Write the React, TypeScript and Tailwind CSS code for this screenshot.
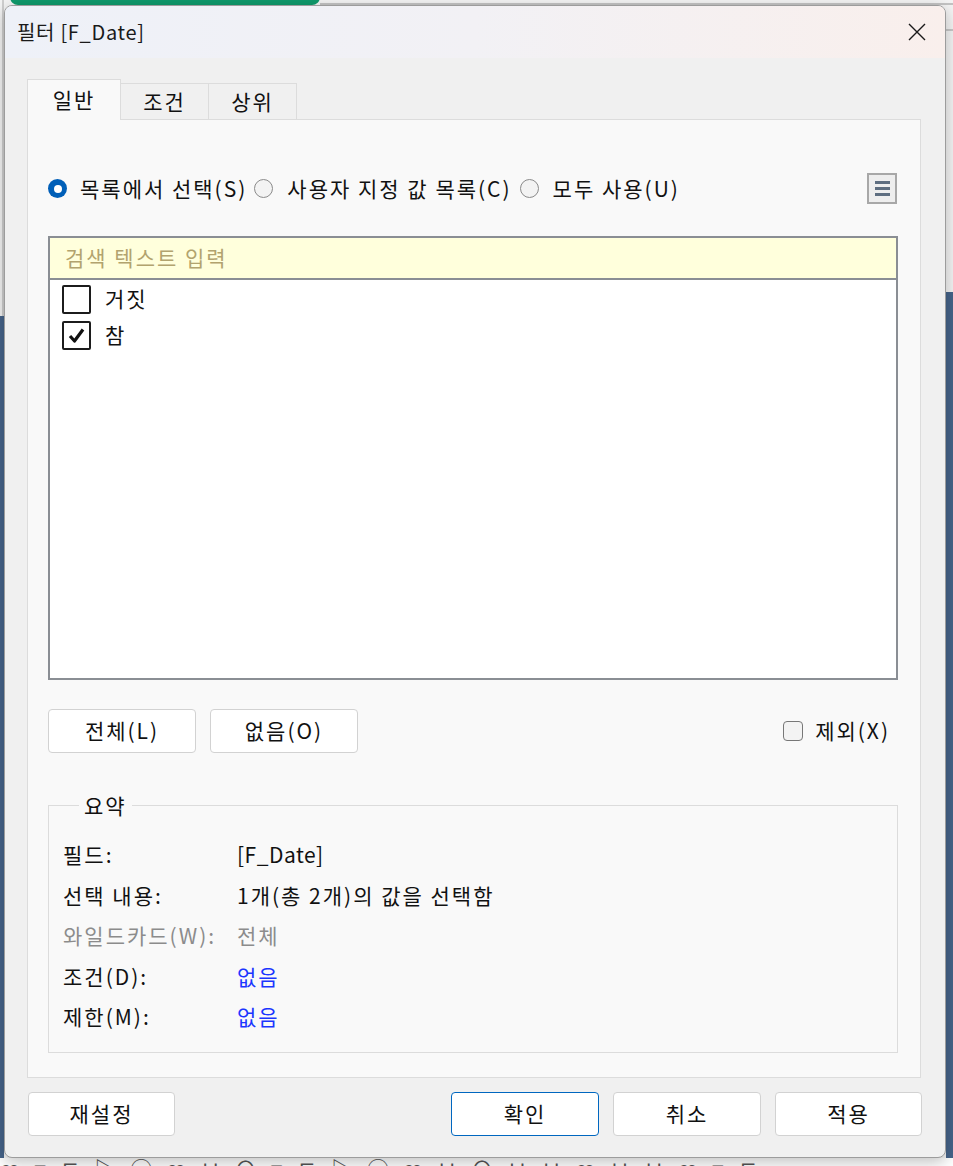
import React from "react";

const font = { fontFamily: '"Noto Sans CJK KR", "Noto Sans", sans-serif' };

function Radio({ checked }: { checked?: boolean }) {
  if (checked) {
    return (
      <span className="flex h-[19px] w-[19px] shrink-0 items-center justify-center rounded-full bg-[#005fb8]">
        <span className="h-[8px] w-[8px] rounded-full bg-white" />
      </span>
    );
  }
  return <span className="block h-[19px] w-[19px] shrink-0 rounded-full border border-[#8a8a8a] bg-[#f3f3f3]" />;
}

function ListCheck({ checked, label }: { checked?: boolean; label: string }) {
  return (
    <div className="flex h-[36px] items-center">
      <span className="flex h-[29px] w-[29px] items-center justify-center rounded-[2px] border-2 border-[#1c1c1c] bg-white">
        {checked && (
          <svg width="19" height="19" viewBox="0 0 19 19">
            <path d="M3 10 L7.5 15 L16 3.5" fill="none" stroke="#111" strokeWidth="3.2" strokeLinejoin="round" />
          </svg>
        )}
      </span>
      <span className="ml-[14px] text-[#111]">{label}</span>
    </div>
  );
}

function Btn({ children, primary, w = "w-[148px]" }: { children: React.ReactNode; primary?: boolean; w?: string }) {
  return (
    <button
      className={`${w} h-[44px] rounded-[4px] border bg-white text-[21px] tracking-[2px] text-[#111] ${
        primary ? "border-[#0067c0]" : "border-[#d2d2d2]"
      }`}
    >
      {children}
    </button>
  );
}

function Row({ label, value, tone, latin }: { label: string; value: string; tone?: "gray" | "blue"; latin?: boolean }) {
  const lc = tone === "gray" ? "text-[#8c8c8c]" : "text-[#111]";
  const vc = tone === "gray" ? "text-[#8c8c8c]" : tone === "blue" ? "text-[#1b36ff]" : "text-[#111]";
  return (
    <div className="flex h-[40.5px] items-center">
      <span className={`w-[174px] ${lc}`}>{label}</span>
      <span className={`${vc} ${latin ? "tracking-[0.5px]" : ""}`}>{value}</span>
    </div>
  );
}

export default function App() {
  return (
    <div className="relative h-[1166px] w-[953px] overflow-hidden bg-[#f4f4f4] text-[21px] tracking-[2px]" style={font}>
      {/* background app behind the dialog */}
      <div className="absolute left-[10px] top-[-6px] h-[11px] w-[310px] rounded-b-[8px] bg-[#0f9a6c]" />
      <div className="absolute left-[320px] top-[3px] h-[2px] w-[633px] bg-[#c4c4c4]" />
      <div className="absolute left-[2px] top-[0px] h-[316px] w-[2px] bg-[#cfcfcf]" />
      <div className="absolute left-0 top-[316px] h-[850px] w-[4px] bg-[#46648a]" />
      <div className="absolute right-0 top-[29px] h-[2px] w-[7px] bg-[#c8c8c8]" />
      <div className="absolute right-0 top-[292px] h-[874px] w-[7px] bg-[#46648a]" />
      <div className="absolute bottom-0 left-0 flex h-[8px] w-full items-start overflow-hidden bg-white">
        <div className="mt-[-2px] whitespace-nowrap text-[22px] leading-none tracking-[14px] text-[#555]">
          ꞷ=ㅌ▷○ꞷㅂ⊙=ㅌ▷○ꞷㅂ⊙ㅂㅂꞷㅂㅂꞷ=ㅌ
        </div>
      </div>

      {/* dialog */}
      <div className="absolute left-[4px] top-[5px] flex h-[1153px] w-[942px] flex-col overflow-hidden rounded-[8px] border border-[#9c9c9c] bg-[#f0f0f0] shadow-[0_4px_16px_rgba(0,0,0,0.25)]">
        <div className="flex h-[52px] shrink-0 items-center justify-between bg-gradient-to-r from-[#eef1f8] via-[#f2f1f5] to-[#f9efec] pl-[12px] pr-[19px]">
          <span className="text-[20px] tracking-[0.7px] text-[#1a1a1a]">필터 [F_Date]</span>
          <svg width="18" height="18" viewBox="0 0 18 18">
            <path d="M1 1 L17 17 M17 1 L1 17" stroke="#1a1a1a" strokeWidth="1.4" />
          </svg>
        </div>

        <div className="flex flex-1 flex-col pl-[22px] pr-[24px] pt-[22px]">
          {/* tabs */}
          <div className="flex h-[40px] items-end text-[#111]">
            <div className="relative z-10 flex h-[41px] w-[94px] items-center justify-center border border-b-0 border-[#dcdcdc] bg-[#f9f9f9]">
              일반
            </div>
            <div className="flex h-[37px] w-[88px] items-center justify-center border border-l-0 border-[#dcdcdc] bg-[#f0f0f0]">
              조건
            </div>
            <div className="flex h-[37px] w-[88px] items-center justify-center border border-l-0 border-[#dcdcdc] bg-[#f0f0f0]">
              상위
            </div>
          </div>

          {/* tab panel */}
          <div className="-mt-px flex h-[959px] flex-col border border-[#dcdcdc] bg-[#f9f9f9] pl-[20px] pr-[22px]">
            <div className="mt-[53px] flex h-[31px] items-center text-[#111]">
              <Radio checked />
              <span className="ml-[13px]">목록에서 선택(S)</span>
              <span className="ml-[7px] flex"><Radio /></span>
              <span className="ml-[14px]">사용자 지정 값 목록(C)</span>
              <span className="ml-[8px] flex"><Radio /></span>
              <span className="ml-[14px]">모두 사용(U)</span>
              <span className="ml-auto mr-[1px] flex h-[31px] w-[30px] flex-col items-center justify-center gap-[3px] border-2 border-[#a8a8a8] bg-[#eeeeee]">
                <span className="h-[3px] w-[15px] bg-[#5e6e80]" />
                <span className="h-[3px] w-[15px] bg-[#5e6e80]" />
                <span className="h-[3px] w-[15px] bg-[#5e6e80]" />
              </span>
            </div>

            <div className="mt-[32px] flex h-[444px] flex-col border-2 border-[#8a8e94] bg-white">
              <div className="flex h-[42px] items-center border-b-2 border-[#8a8e94] bg-[#ffffdc] pl-[15px] text-[#b2a36e]">
                검색 텍스트 입력
              </div>
              <div className="flex flex-col pl-[12px] pt-[1px]">
                <ListCheck label="거짓" />
                <ListCheck label="참" checked />
              </div>
            </div>

            <div className="mt-[29px] flex h-[44px] items-center">
              <Btn>전체(L)</Btn>
              <span className="ml-[14px] flex"><Btn>없음(O)</Btn></span>
              <span className="ml-auto flex items-center pr-[8px] text-[#111]">
                <span className="h-[20px] w-[20px] rounded-[4px] border border-[#777] bg-[#f3f3f3]" />
                <span className="ml-[12px]">제외(X)</span>
              </span>
            </div>

            <fieldset className="mt-[37px] h-[263px] border border-[#dcdcdc] pl-[14px] pt-[13px]">
              <legend className="ml-[16px] px-[5px] text-[#111]">요약</legend>
              <Row label="필드:" value="[F_Date]" latin />
              <Row label="선택 내용:" value="1개(총 2개)의 값을 선택함" />
              <Row label="와일드카드(W):" value="전체" tone="gray" />
              <Row label="조건(D):" value="없음" tone="blue" />
              <Row label="제한(M):" value="없음" tone="blue" />
            </fieldset>
          </div>

          <div className="mt-[14px] flex items-center">
            <span className="ml-[1px] flex"><Btn w="w-[147px]">재설정</Btn></span>
            <span className="ml-auto flex"><Btn primary>확인</Btn></span>
            <span className="ml-[14px] flex"><Btn>취소</Btn></span>
            <span className="ml-[14px] mr-[-1px] flex"><Btn w="w-[147px]">적용</Btn></span>
          </div>
        </div>
      </div>
    </div>
  );
}
